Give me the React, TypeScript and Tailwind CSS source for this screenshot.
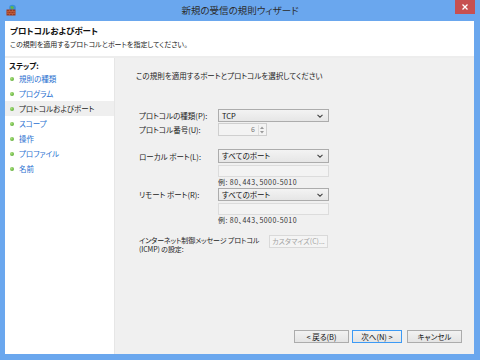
import React from "react"

const jp = "font-['Noto_Sans_CJK_JP','Noto_Sans',sans-serif] [font-feature-settings:'palt']"

const steps = [
  { label: "規則の種類", current: false },
  { label: "プログラム", current: false },
  { label: "プロトコルおよびポート", current: true },
  { label: "スコープ", current: false },
  { label: "操作", current: false },
  { label: "プロファイル", current: false },
  { label: "名前", current: false },
]

function Chevron() {
  return (
    <svg width="6" height="4" viewBox="0 0 6 4" className="shrink-0">
      <path d="M0.5 0.8 L3 3.2 L5.5 0.8" fill="none" stroke="#444" strokeWidth="1.1" />
    </svg>
  )
}

function Select({ value, h = "h-[13px]" }: { value: string; h?: string }) {
  return (
    <div
      className={`flex ${h} w-[111px] items-center justify-between border border-[#acacac] bg-gradient-to-b from-[#f3f3f3] to-[#e6e6e6] pl-[3px] pr-[5px] text-[7.5px] text-[#111]`}
    >
      <span>{value}</span>
      <Chevron />
    </div>
  )
}

function DisabledBox() {
  return <div className="mt-[2px] h-[12px] w-[111px] border border-[#dcdcdc] bg-[#f3f3f3]" />
}

function Example() {
  return (
    <div className="h-[10px] text-[7px] leading-[10px] tracking-[0.45px] text-[#333]">
      例: 80、443、5000-5010
    </div>
  )
}

function FormRow({ label, children, mt }: { label: string; children: React.ReactNode; mt: string }) {
  return (
    <div className={`flex items-center ${mt}`}>
      <div className="w-[79px] text-[7.5px] leading-[9px] text-[#222]">{label}</div>
      {children}
    </div>
  )
}

function WizButton({ children, primary }: { children: React.ReactNode; primary?: boolean }) {
  return (
    <div
      className={`flex h-[13px] items-center justify-center border bg-gradient-to-b from-[#f2f2f2] to-[#e4e4e4] text-[7.5px] text-[#111] ${
        primary ? "w-[50px] border-[#3c9af5]" : "w-[55px] border-[#acacac]"
      }`}
    >
      {children}
    </div>
  )
}

function FirewallIcon() {
  return (
    <svg width="11" height="12" viewBox="0 0 11 12">
      <circle cx="6.5" cy="4" r="3.3" fill="#3a8fd8" />
      <path d="M4.5 2.5 Q6 1.2 7.5 2.8 Q8.5 4 7 5 Q5.5 5.5 4.5 4 Z" fill="#5cb848" />
      <rect x="0.5" y="5.5" width="9" height="6" fill="#9a3b22" />
      <path d="M0.5 7.5 H9.5 M0.5 9.5 H9.5 M3.5 5.5 V7.5 M6.5 5.5 V7.5 M2 7.5 V9.5 M5 7.5 V9.5 M8 7.5 V9.5 M3.5 9.5 V11.5 M6.5 9.5 V11.5" stroke="#c96a4a" strokeWidth="0.6" />
    </svg>
  )
}

export default function App() {
  return (
    <div className={`flex h-[360px] w-[480px] flex-col bg-[#6aa7ee] ${jp}`}>
      {/* Title bar */}
      <div className="relative flex h-[21px] items-center">
        <div className="ml-[6px] mt-[-2px]">
          <FirewallIcon />
        </div>
        <div className="absolute inset-x-0 top-[4px] text-center text-[9.5px] leading-[12px] text-[#2b2b2b]">
          新規の受信の規則ウィザード
        </div>
        <div className="absolute right-[5px] top-0 flex h-[14px] w-[20px] items-center justify-center bg-[#c75050]">
          <svg width="6" height="6" viewBox="0 0 6 6">
            <path d="M0.5 0.5 L5.5 5.5 M5.5 0.5 L0.5 5.5" stroke="#fff" strokeWidth="1.3" />
          </svg>
        </div>
      </div>

      {/* Client */}
      <div className="mx-[6px] mb-[6px] ml-[5px] flex flex-1 flex-col bg-white">
        <div className="h-[37px] border-b-2 border-[#ededed] pl-[5px] pt-[3px]">
          <div className="text-[8.5px] font-bold leading-[12px] text-[#111]">プロトコルおよびポート</div>
          <div className="mt-[3px] text-[7px] leading-[10px] text-[#222]">
            この規則を適用するプロトコルとポートを指定してください。
          </div>
        </div>

        <div className="flex flex-1">
          {/* Steps */}
          <div className="w-[110px] border-r border-[#e6e6e6] pt-[2px]">
            <div className="h-[11px] pl-[4px] text-[7.5px] font-bold leading-[11px] text-[#111]">ステップ:</div>
            {steps.map((s) => (
              <div
                key={s.label}
                className={`flex h-[15px] items-center ${s.current ? "bg-[#efefef]" : ""}`}
              >
                <div className="ml-[5px] h-[4px] w-[4px] rounded-full bg-[radial-gradient(circle_at_35%_35%,#a8e07a,#4a9e26)]" />
                <div
                  className={`ml-[5px] text-[7.5px] leading-[10px] ${
                    s.current ? "text-[#222]" : "text-[#1f6fd0]"
                  }`}
                >
                  {s.label}
                </div>
              </div>
            ))}
          </div>

          {/* Content */}
          <div className="flex flex-1 flex-col bg-[#f0f0f0]">
            <div className="ml-[21px] mt-[13px] h-[10px] text-[7.5px] leading-[10px] text-[#222]">
              この規則を適用するポートとプロトコルを選択してください
            </div>

            <div className="ml-[24px] flex flex-col">
              <FormRow label="プロトコルの種類(P):" mt="mt-[28px]">
                <Select value="TCP" />
              </FormRow>
              <FormRow label="プロトコル番号(U):" mt="mt-[1px]">
                <div className="flex h-[13px] w-[49px] items-center justify-end border border-[#cfcfcf] bg-[#f3f3f3] pr-[1px]">
                  <span className="mr-[3px] text-[7px] text-[#777]">6</span>
                  <div className="flex h-[10px] w-[7px] flex-col items-center justify-center gap-[2px] border-l border-[#ddd]">
                    <svg width="4" height="3" viewBox="0 0 4 3">
                      <path d="M0 3 L2 0.5 L4 3 Z" fill="#999" />
                    </svg>
                    <svg width="4" height="3" viewBox="0 0 4 3">
                      <path d="M0 0 L2 2.5 L4 0 Z" fill="#999" />
                    </svg>
                  </div>
                </div>
              </FormRow>

              <FormRow label="ローカル ポート(L):" mt="mt-[13px]">
                <Select value="すべてのポート" h="h-[14px]" />
              </FormRow>
              <div className="ml-[79px]">
                <DisabledBox />
                <Example />
              </div>

              <FormRow label="リモート ポート(R):" mt="mt-[1px]">
                <Select value="すべてのポート" />
              </FormRow>
              <div className="ml-[79px]">
                <DisabledBox />
                <Example />
              </div>

              <div className="mt-[10px] flex items-start">
                <div className="w-[130px] whitespace-nowrap pt-[1px] text-[7px] leading-[9px] tracking-[-0.1px] text-[#222]">
                  インターネット制御メッセージ プロトコル
                  <br />
                  (ICMP) の設定:
                </div>
                <div className="flex h-[13px] w-[59px] items-center justify-center border border-[#d9d9d9] bg-[#f4f4f4] text-[7px] text-[#a3a3a3]">
                  カスタマイズ(C)...
                </div>
              </div>
            </div>

            <div className="mt-auto flex justify-end pb-[11px] pr-[12px]">
              <WizButton>&lt; 戻る(B)</WizButton>
              <div className="w-[3px]" />
              <WizButton primary>次へ(N) &gt;</WizButton>
              <div className="w-[5px]" />
              <WizButton>キャンセル</WizButton>
            </div>
          </div>
        </div>
      </div>
    </div>
  )
}
